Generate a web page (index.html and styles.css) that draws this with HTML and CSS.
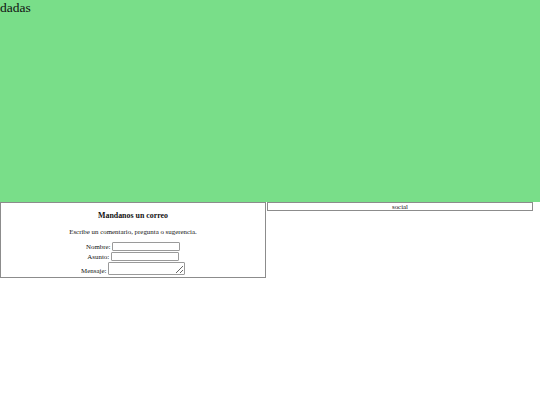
FILE: index.html
```html
<!DOCTYPE html>
<html lang="es">
<head>
<meta charset="utf-8">
<title>dadas</title>
<link rel="stylesheet" href="styles.css">
</head>
<body>
<header class="header">
  <div class="brand">dadas</div>
</header>
<main class="row">
  <section class="contact">
    <h3 class="contact-title">Mandanos un correo</h3>
    <p class="contact-text">Escribe un comentario, pregunta o sugerencia.</p>
    <form class="form">
      <div class="field">
        <label class="label" for="nombre">Nombre:</label>
        <input class="input" id="nombre" type="text">
      </div>
      <div class="field">
        <label class="label" for="asunto">Asunto:</label>
        <input class="input" id="asunto" type="text">
      </div>
      <div class="field field-area">
        <label class="label" for="mensaje">Mensaje:</label>
        <textarea class="textarea" id="mensaje"></textarea>
      </div>
    </form>
  </section>
  <aside class="social">social</aside>
</main>
</body>
</html>
```

FILE: styles.css
```css
html, body {
  margin: 0;
  padding: 0;
  background: #ffffff;
  font-family: "Liberation Serif", "Times New Roman", serif;
  color: #111;
}

.header {
  height: 202px;
  background: #79de89;
}

.brand {
  font-size: 13.5px;
  line-height: 15.5px;
}

.row {
  display: flex;
  align-items: flex-start;
  gap: 1px;
}

.contact {
  width: 266px;
  box-sizing: border-box;
  border: 1px solid #8c8c8c;
  text-align: center;
}

.contact-title {
  font-size: 7.9px;
  line-height: 9px;
  font-weight: bold;
  margin: 7.5px 0 8px;
}

.contact-text {
  font-size: 6.9px;
  line-height: 7.8px;
  margin: 0 0 7px;
}

.form {
  display: flex;
  flex-direction: column;
  gap: 1.5px;
  padding: 0 0 2px;
}

.field {
  display: flex;
  justify-content: center;
  align-items: center;
  gap: 1.5px;
  font-size: 6.9px;
  line-height: 7.5px;
}

.field-area {
  align-items: flex-end;
}

.input {
  width: 68px;
  height: 8.5px;
  box-sizing: border-box;
  border: 1px solid #9a9a9a;
  border-radius: 1px;
  padding: 0;
  margin: 0;
  font-size: 6px;
  background: #fff;
}

.textarea {
  width: 77px;
  height: 12.5px;
  box-sizing: border-box;
  border: 1px solid #9a9a9a;
  border-radius: 1px;
  padding: 0;
  margin: 0;
  font-size: 6px;
  resize: both;
  background: #fff;
}

.social {
  width: 266px;
  box-sizing: border-box;
  border: 1px solid #8c8c8c;
  text-align: center;
  font-size: 6.9px;
  line-height: 7px;
}
```
